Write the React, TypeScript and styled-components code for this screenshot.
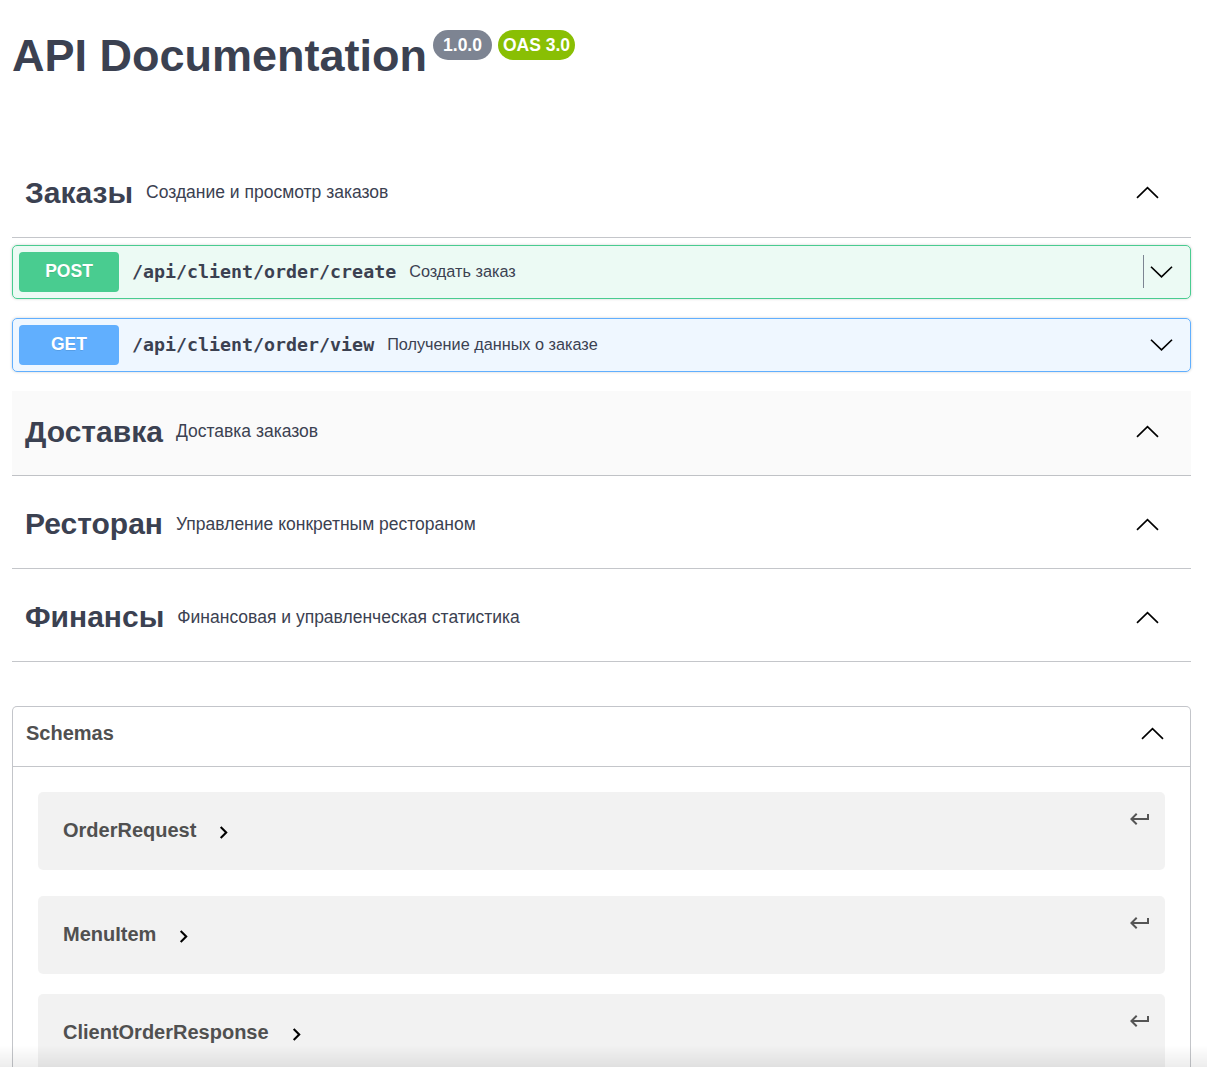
import styled, { createGlobalStyle } from 'styled-components';

const GlobalStyle = createGlobalStyle`
  body {
    margin: 0;
    background: #fff;
    font-family: 'Liberation Sans', Arial, sans-serif;
    color: #3b4151;
  }
`;

const Page = styled.div`
  padding: 30px 16px 0 12px;
`;

const Info = styled.div`
  display: flex;
  align-items: flex-start;
  margin-bottom: 70px;
`;

const Title = styled.h2`
  margin: 0;
  font-size: 45px;
  line-height: 52px;
  font-weight: 700;
  color: #3b4151;
`;

const Badge = styled.span<{ $bg: string; $pad: number }>`
  display: inline-flex;
  align-items: center;
  height: 30px;
  margin-left: 6px;
  padding: 0 ${({ $pad }) => $pad}px;
  border-radius: 15px;
  background: ${({ $bg }) => $bg};
  color: #fff;
  font-size: 17.5px;
  font-weight: 700;
`;

const TagHeader = styled.div<{ $hover?: boolean }>`
  display: flex;
  align-items: center;
  box-sizing: border-box;
  height: 85.5px;
  padding: 0 31px 3px 13px;
  margin-bottom: 7.25px;
  border-bottom: 1px solid rgba(59, 65, 81, 0.3);
  background: ${({ $hover }) => ($hover ? 'rgba(0, 0, 0, 0.02)' : 'transparent')};
`;

const TagName = styled.span`
  font-size: 30px;
  font-weight: 700;
  color: #3b4151;
`;

const TagDesc = styled.small`
  flex: 1;
  padding: 0 13px;
  font-size: 17.5px;
  color: #3b4151;
`;

const Opblock = styled.div<{ $color: string; $bg: string }>`
  display: flex;
  align-items: center;
  padding: 6px 16px 6px 6px;
  margin-bottom: 19px;
  border: 1px solid ${({ $color }) => $color};
  border-radius: 5px;
  background: ${({ $bg }) => $bg};
  box-shadow: 0 0 3px rgba(0, 0, 0, 0.19);
`;

const Method = styled.span<{ $color: string }>`
  display: flex;
  align-items: center;
  justify-content: center;
  width: 100px;
  height: 40px;
  border-radius: 4px;
  background: ${({ $color }) => $color};
  color: #fff;
  font-size: 17.5px;
  font-weight: 700;
  text-shadow: 0 1px 0 rgba(0, 0, 0, 0.1);
`;

const Path = styled.span`
  padding: 0 13px;
  font-family: 'DejaVu Sans Mono', 'Liberation Mono', monospace;
  font-size: 18.3px;
  font-weight: 700;
  color: #3b4151;
`;

const OpDesc = styled.span`
  flex: 1;
  font-size: 16.25px;
  color: #3b4151;
`;

const Divider = styled.span`
  width: 1px;
  height: 33px;
  margin-right: 5px;
  background: #7d8492;
`;

const Models = styled.section`
  margin-top: 44px;
  border: 1px solid rgba(59, 65, 81, 0.3);
  border-bottom: none;
  border-radius: 5px 5px 0 0;
`;

const ModelsHeader = styled.div`
  display: flex;
  align-items: center;
  justify-content: space-between;
  height: 53px;
  padding: 0 25px 6px 13px;
  border-bottom: 1px solid rgba(59, 65, 81, 0.3);
  font-size: 20px;
  font-weight: 700;
  color: #505050;
`;

const ModelList = styled.div`
  display: flex;
  flex-direction: column;
  padding: 25px 25px 0;
`;

const ModelBox = styled.div<{ $gap: number }>`
  position: relative;
  display: flex;
  align-items: center;
  height: 78px;
  margin-bottom: ${({ $gap }) => $gap}px;
  padding-left: 25px;
  border-radius: 5px;
  background: rgba(0, 0, 0, 0.05);
`;

const ModelName = styled.span`
  font-size: 20px;
  font-weight: 700;
  color: #505050;
`;

const Toggle = styled.svg`
  margin: 4px 0 0 15px;
`;

const JumpIcon = styled.svg`
  position: absolute;
  top: 15px;
  right: 13px;
`;

const BottomFade = styled.div`
  position: fixed;
  left: 0;
  right: 0;
  bottom: 0;
  height: 22px;
  background: linear-gradient(rgba(0, 0, 0, 0), rgba(0, 0, 0, 0.07));
  pointer-events: none;
`;

const Chevron = ({ up }: { up?: boolean }) => (
  <svg width="25" height="25" viewBox="0 0 20 20">
    <polyline
      points={up ? '1.6,14.3 10,6.2 18.4,14.3' : '1.6,6.2 10,14.3 18.4,6.2'}
      fill="none"
      stroke="#000"
      strokeWidth="1.35"
    />
  </svg>
);

const tags = [
  { name: 'Доставка', desc: 'Доставка заказов', hover: true },
  { name: 'Ресторан', desc: 'Управление конкретным рестораном' },
  { name: 'Финансы', desc: 'Финансовая и управленческая статистика' },
];

const models = [
  { name: 'OrderRequest', gap: 26 },
  { name: 'MenuItem', gap: 20 },
  { name: 'ClientOrderResponse', gap: 20 },
];

export default function App() {
  return (
    <>
      <GlobalStyle />
      <Page>
        <Info>
          <Title>API Documentation</Title>
          <Badge $bg="#7d8492" $pad={10}>1.0.0</Badge>
          <Badge $bg="#89bf04" $pad={5}>OAS 3.0</Badge>
        </Info>

        <TagHeader>
          <TagName>Заказы</TagName>
          <TagDesc>Создание и просмотр заказов</TagDesc>
          <Chevron up />
        </TagHeader>
        <Opblock $color="#49cc90" $bg="rgba(73, 204, 144, 0.1)">
          <Method $color="#49cc90">POST</Method>
          <Path>/api/client/order/create</Path>
          <OpDesc>Создать заказ</OpDesc>
          <Divider />
          <Chevron />
        </Opblock>
        <Opblock $color="#61affe" $bg="rgba(97, 175, 254, 0.1)">
          <Method $color="#61affe">GET</Method>
          <Path>/api/client/order/view</Path>
          <OpDesc>Получение данных о заказе</OpDesc>
          <Chevron />
        </Opblock>

        {tags.map((tag) => (
          <TagHeader key={tag.name} $hover={tag.hover}>
            <TagName>{tag.name}</TagName>
            <TagDesc>{tag.desc}</TagDesc>
            <Chevron up />
          </TagHeader>
        ))}

        <Models>
          <ModelsHeader>
            <span>Schemas</span>
            <Chevron up />
          </ModelsHeader>
          <ModelList>
            {models.map((m) => (
              <ModelBox key={m.name} $gap={m.gap}>
                <ModelName>{m.name}</ModelName>
                <Toggle width="25" height="25" viewBox="0 0 24 24">
                  <path d="M10 6L8.59 7.41 13.17 12l-4.58 4.59L10 18l6-6z" fill="#000" />
                </Toggle>
                <JumpIcon width="24" height="24" viewBox="0 0 24 24">
                  <path d="M19 7v4H5.83l3.58-3.59L8 6l-6 6 6 6 1.41-1.41L5.83 13H21V7z" fill="#555" />
                </JumpIcon>
              </ModelBox>
            ))}
          </ModelList>
        </Models>
      </Page>
      <BottomFade />
    </>
  );
}
